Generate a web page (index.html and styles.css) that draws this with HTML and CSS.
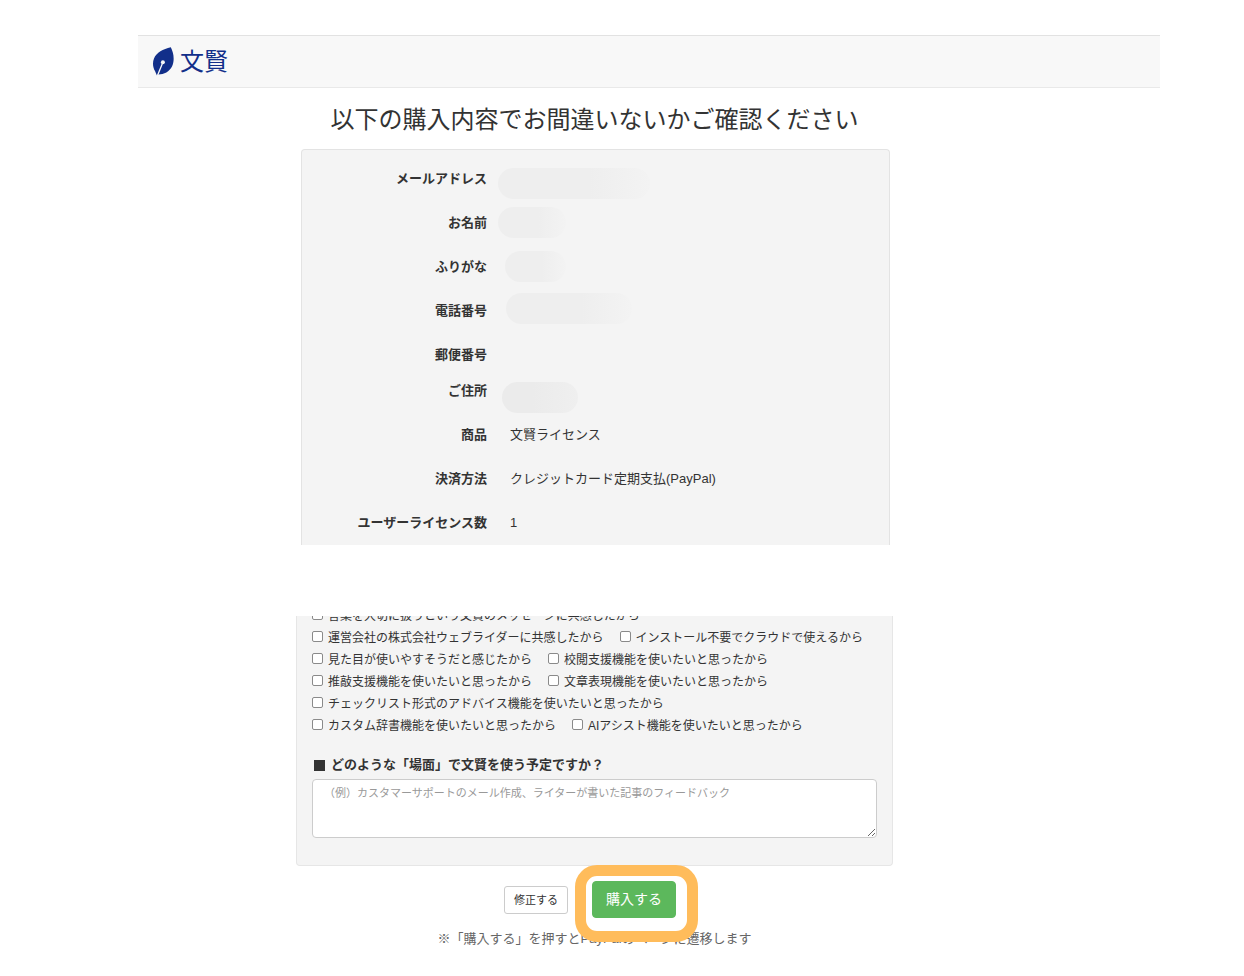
FILE: index.html
```html
<!DOCTYPE html>
<html lang="ja">
<head>
<meta charset="utf-8">
<meta name="viewport" content="width=device-width, initial-scale=1">
<title>購入内容の確認 - 文賢</title>
<link rel="stylesheet" href="styles.css">
</head>
<body>
<div class="page">
  <header class="navbar">
    <a class="brand" href="#">
      <svg class="brand-icon" viewBox="0 0 22 29" aria-hidden="true">
        <path fill="#122f8a" d="M18.800.3C11 2 4.500 5.500 2 11.500C.2 16 1 20.500 3 24L4.800 28.300L6.500 27.500C12 27.500 17.500 24.500 20 19.500C22.800 13.500 21.800 6 18.800.3Z"/>
        <path stroke="#f8f8f8" stroke-width="1.300" d="M10.800 15.500L5.500 28.500"/>
        <circle cx="10.900" cy="15.200" r="2" fill="#f8f8f8"/>
      </svg>
      <span>文賢</span>
    </a>
  </header>
  <main class="column">
    <h1 class="title">以下の購入内容でお間違いないかご確認ください</h1>
    <dl class="summary">
      <div class="row"><dt>メールアドレス</dt><dd><span class="mask mask-email"></span></dd></div>
      <div class="row"><dt>お名前</dt><dd><span class="mask mask-name"></span></dd></div>
      <div class="row"><dt>ふりがな</dt><dd><span class="mask mask-kana"></span></dd></div>
      <div class="row"><dt>電話番号</dt><dd><span class="mask mask-phone"></span></dd></div>
      <div class="row"><dt>郵便番号</dt><dd></dd></div>
      <div class="row row-short"><dt>ご住所</dt><dd><span class="mask mask-address"></span></dd></div>
      <div class="row"><dt>商品</dt><dd class="value">文賢ライセンス</dd></div>
      <div class="row"><dt>決済方法</dt><dd class="value">クレジットカード定期支払(PayPal)</dd></div>
      <div class="row"><dt>ユーザーライセンス数</dt><dd class="value">1</dd></div>
    </dl>
    <form>
      <div class="survey">
        <div class="options">
          <label class="option"><input type="checkbox">言葉を大切に扱うという文賢のメッセージに共感したから</label>
          <label class="option"><input type="checkbox">運営会社の株式会社ウェブライダーに共感したから</label>
          <label class="option"><input type="checkbox">インストール不要でクラウドで使えるから</label>
          <label class="option"><input type="checkbox">見た目が使いやすそうだと感じたから</label>
          <label class="option"><input type="checkbox">校閲支援機能を使いたいと思ったから</label>
          <label class="option"><input type="checkbox">推敲支援機能を使いたいと思ったから</label>
          <label class="option"><input type="checkbox">文章表現機能を使いたいと思ったから</label>
          <label class="option"><input type="checkbox">チェックリスト形式のアドバイス機能を使いたいと思ったから</label>
          <label class="option"><input type="checkbox">カスタム辞書機能を使いたいと思ったから</label>
          <label class="option"><input type="checkbox">AIアシスト機能を使いたいと思ったから</label>
        </div>
        <label class="question" for="scene"><span class="square"></span>どのような「場面」で文賢を使う予定ですか？</label>
        <textarea class="answer" id="scene" placeholder="（例）カスタマーサポートのメール作成、ライターが書いた記事のフィードバック"></textarea>
      </div>
      <div class="actions">
        <button class="btn btn-back" type="button">修正する</button>
        <div class="buy">
          <button class="btn btn-buy" type="submit">購入する</button>
          <span class="ring"></span>
        </div>
      </div>
      <p class="note">※「購入する」を押すとPayPalのページに遷移します</p>
    </form>
  </main>
</div>
</body>
</html>
```

FILE: styles.css
```css
* { box-sizing: border-box; }

body {
  margin: 0;
  background: #fff;
  color: #333;
  font-family: "Liberation Sans", "Noto Sans CJK JP", sans-serif;
  font-size: 13px;
  line-height: 20px;
}

.page { padding: 35px 84px 24px 138px; }

.navbar {
  display: flex;
  align-items: center;
  height: 53px;
  padding: 0 14px;
  background: #f8f8f8;
  border-top: 1px solid #e2e2e2;
  border-bottom: 1px solid #e9e9e9;
}

.brand {
  display: flex;
  align-items: center;
  gap: 6px;
  color: #122f8a;
  font-size: 24px;
  font-weight: 400;
  line-height: 32px;
  text-decoration: none;
}

.brand-icon { width: 22px; height: 29px; }

.column { max-width: 597px; margin-left: 158px; }

.title {
  margin: 16px 0 13px;
  font-size: 24px;
  font-weight: 400;
  line-height: 32px;
  text-align: center;
  white-space: nowrap;
}

.summary {
  margin: 0 3px 71px 5px;
  padding-top: 7px;
  background: #f4f4f4;
  border: 1px solid #e3e3e3;
  border-bottom: 0;
  border-radius: 4px 4px 0 0;
}

.row {
  display: grid;
  grid-template-columns: 185px 1fr;
  gap: 11px;
  align-items: center;
  height: 44px;
}

.row dt { font-weight: 700; text-align: right; }
.row dd { margin: 0; }
.row .value { padding-left: 12px; }
.row-short { height: 36px; }
.row-short dt { align-self: start; padding-top: 4px; }

.mask {
  display: block;
  height: 31px;
  border-radius: 16px;
  background: linear-gradient(90deg, #eeeeee 60%, #f3f3f3);
}

.mask-email { width: 152px; margin-top: 8px; }
.mask-name { width: 68px; margin-bottom: 2px; }
.mask-kana { width: 61px; margin: 0 0 2px 7px; }
.mask-phone { width: 126px; margin: 0 0 6px 8px; }
.mask-address { width: 76px; margin: 5px 0 0 4px; background: linear-gradient(90deg, #ebebeb 40%, #efefef); }

.survey {
  padding: 0 15px 27px;
  overflow: hidden;
  background: #f4f4f4;
  border: 1px solid #e6e6e6;
  border-top: 0;
  border-radius: 0 0 4px 4px;
}

.options {
  display: flex;
  flex-wrap: wrap;
  column-gap: 16px;
  margin-top: -11px;
  font-size: 12px;
  line-height: 22px;
}

.option { display: flex; align-items: center; gap: 5px; white-space: nowrap; }

.option input {
  appearance: none;
  width: 11px;
  height: 11px;
  margin: 0 0 4px;
  background: #fff;
  border: 1px solid #8a8a8a;
  border-radius: 2px;
}

.option input:checked { background: #337ab7; }

.question {
  display: flex;
  align-items: center;
  gap: 6px;
  margin: 18px 0 4px;
  padding-left: 2px;
  font-weight: 700;
}

.square { width: 11px; height: 11px; background: #333; }

.answer {
  display: block;
  width: 100%;
  height: 59px;
  padding: 5px 11px;
  background: #fff;
  border: 1px solid #ccc;
  border-radius: 4px;
  color: #555;
  font-family: inherit;
  font-size: 11px;
  line-height: 16px;
}

.answer::placeholder { color: #999; }

.actions {
  display: flex;
  align-items: center;
  justify-content: center;
  gap: 24px;
  margin-top: 15px;
  padding-right: 9px;
}

.btn { font-family: inherit; border: 1px solid; cursor: pointer; }

.btn-back {
  padding: 5px 9px;
  background: #fff;
  border-color: #ccc;
  border-radius: 3px;
  color: #333;
  font-size: 11px;
  line-height: 16px;
}

.buy { position: relative; }

.btn-buy {
  display: block;
  padding: 7px 13px;
  background: #5cb85c;
  border-color: #5cb85c;
  border-radius: 4px;
  color: #fff;
  font-size: 14px;
  line-height: 21px;
}

.ring {
  position: absolute;
  inset: -16px -22px -24px -17px;
  border: 11px solid #ffbc5b;
  border-radius: 22px;
  pointer-events: none;
}

.note {
  margin: 11px 0 0;
  color: #666;
  text-align: center;
}
```
